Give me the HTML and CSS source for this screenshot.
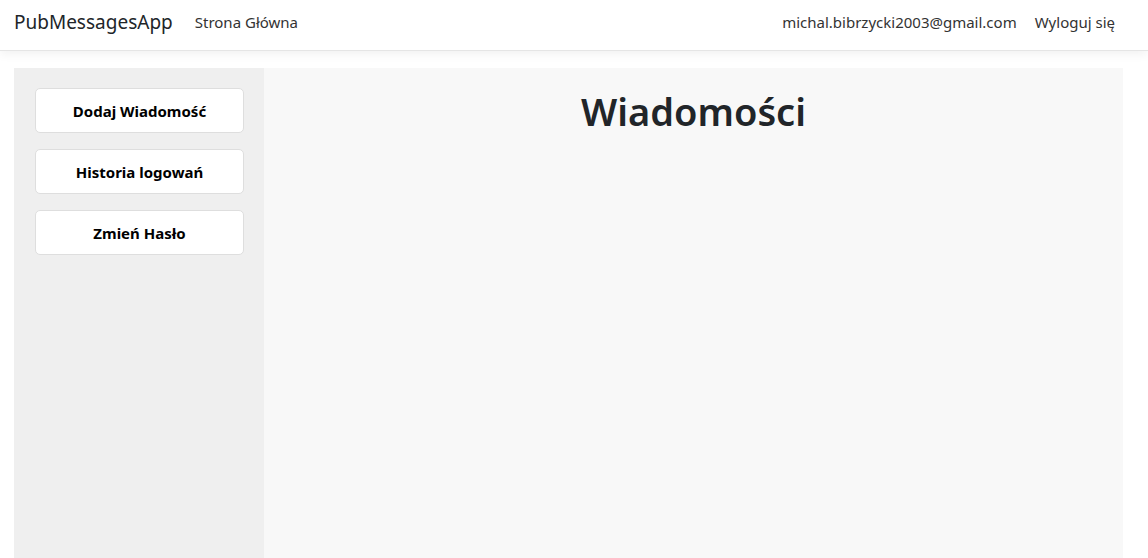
FILE: index.html
```html
<!DOCTYPE html>
<html lang="pl">
<head>
<meta charset="utf-8">
<title>PubMessagesApp</title>
<link rel="stylesheet" href="styles.css">
</head>
<body>
<header class="navbar">
  <div class="nav-left">
    <a class="brand" href="#">PubMessagesApp</a>
    <a class="nav-link" href="#">Strona Główna</a>
  </div>
  <div class="nav-right">
    <a class="nav-link" href="#">michal.bibrzycki2003@gmail.com</a>
    <a class="nav-link" href="#">Wyloguj się</a>
  </div>
</header>
<main class="layout">
  <aside class="sidebar">
    <button class="side-btn">Dodaj Wiadomość</button>
    <button class="side-btn">Historia logowań</button>
    <button class="side-btn">Zmień Hasło</button>
  </aside>
  <section class="content">
    <h1 class="title">Wiadomości</h1>
  </section>
</main>
</body>
</html>
```
FILE: styles.css
```css
* { box-sizing: border-box; }
html, body { height: 100%; }
body {
  margin: 0;
  font-family: "Noto Sans", "Open Sans", sans-serif;
  color: #212529;
  background: #fff;
  display: flex;
  flex-direction: column;
  overflow: hidden;
}
a { text-decoration: none; }
.navbar {
  height: 51px;
  display: flex;
  align-items: center;
  justify-content: space-between;
  padding: 0 14px 6px;
  border-bottom: 1px solid #e5e5e5;
  box-shadow: 0 3px 10px rgba(0,0,0,0.06);
  flex: none;
}
.nav-left, .nav-right { display: flex; align-items: center; }
.brand {
  font-size: 19px;
  color: #212529;
  margin-right: 22px;
}
.nav-link {
  font-size: 15px;
  color: #333;
  padding: 0 9px;
}
.nav-left .nav-link { padding-left: 0; }
.nav-right .nav-link:last-child { padding-right: 19px; }
.layout {
  flex: 1;
  display: flex;
  margin: 17px 25px 0 14px;
}
.sidebar {
  width: 250px;
  background: #efefef;
  padding: 20px 20px;
  display: flex;
  flex-direction: column;
  gap: 16px;
}
.side-btn {
  width: 209px;
  height: 45px;
  margin-left: 1px;
  background: #fff;
  border: 1px solid #dedede;
  border-radius: 5px;
  font-family: inherit;
  font-weight: 700;
  font-size: 15px;
  color: #000;
}
.content {
  flex: 1;
  background: #f8f8f8;
  text-align: center;
}
.title {
  margin: 21px 0 0;
  font-size: 38px;
  font-weight: 600;
  line-height: 1.2;
  color: #212529;
}
```
